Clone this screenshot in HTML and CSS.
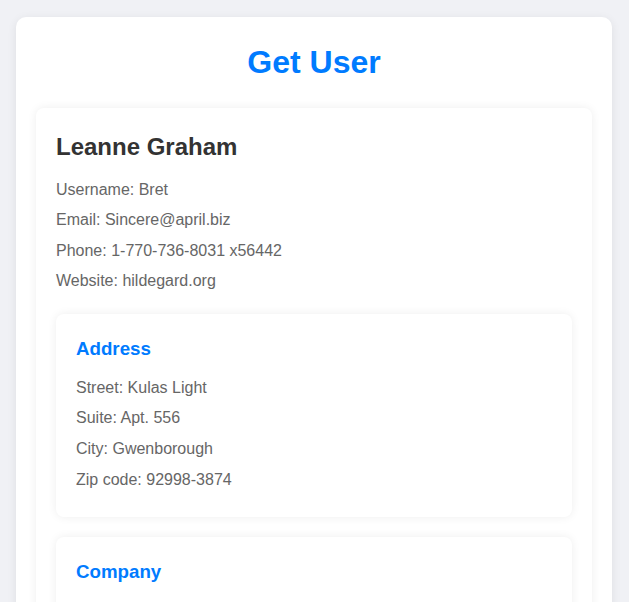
FILE: index.html
```html
<!DOCTYPE html>
<html lang="en">
<head>
<meta charset="utf-8">
<title>Get User</title>
<link rel="stylesheet" href="styles.css">
</head>
<body>
<div class="container">
  <h1 class="title">Get User</h1>
  <div class="card">
    <h2 class="name">Leanne Graham</h2>
    <p>Username: Bret</p>
    <p>Email: Sincere@april.biz</p>
    <p>Phone: 1-770-736-8031 x56442</p>
    <p>Website: hildegard.org</p>
    <div class="card sub">
      <h3 class="section">Address</h3>
      <p>Street: Kulas Light</p>
      <p>Suite: Apt. 556</p>
      <p>City: Gwenborough</p>
      <p>Zip code: 92998-3874</p>
    </div>
    <div class="card sub">
      <h3 class="section">Company</h3>
      <p>Name: Romaguera-Crona</p>
      <p>Catch phrase: Multi-layered client-server neural-net</p>
      <p>BS: harness real-time e-markets</p>
    </div>
  </div>
</div>
</body>
</html>
```
FILE: styles.css
```css
html, body {
  margin: 0;
  padding: 0;
}
body {
  background: #f0f1f5;
  font-family: "Liberation Sans", Arial, sans-serif;
  line-height: 1.6;
  color: #666;
  padding: 17px 17px 16px 16px;
}
.container {
  background: #fff;
  border-radius: 10px;
  box-shadow: 0 2px 10px rgba(0, 0, 0, 0.08);
  padding: 20px;
}
.title {
  margin: 0 0 20px;
  font-size: 32px;
  color: #007bff;
  text-align: center;
}
.card {
  background: #fff;
  border-radius: 8px;
  box-shadow: 0 0 10px rgba(0, 0, 0, 0.07);
  padding: 20px;
}
.sub {
  margin-top: 20px;
}
.name {
  margin: 0 0 10px;
  font-size: 24px;
  color: #333;
}
.section {
  margin: 0 0 11px;
  font-size: 18.72px;
  color: #007bff;
}
p {
  margin: 5px 0;
  font-size: 16px;
}
```
